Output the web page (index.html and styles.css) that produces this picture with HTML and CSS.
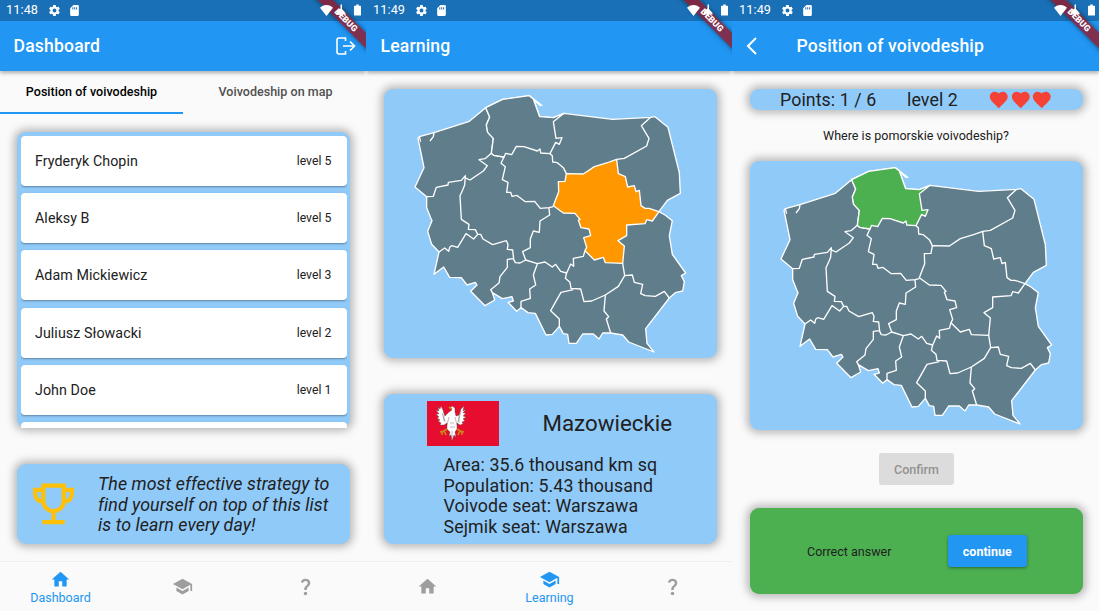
FILE: index.html
```html
<!DOCTYPE html>
<html lang="en">
<head>
<meta charset="utf-8">
<title>Voivodeships</title>
<link rel="stylesheet" href="styles.css">
</head>
<body>
<svg class="defs" aria-hidden="true">
  <symbol id="gear" viewBox="0 0 24 24"><path fill-rule="evenodd" d="M19.400 13c0-.3.1-.7.1-1s0-.7-.1-1l2.100-1.600c.2-.2.2-.4.1-.6l-2-3.500c-.1-.2-.4-.3-.6-.2l-2.500 1c-.5-.4-1.100-.7-1.700-1l-.4-2.600c0-.3-.2-.5-.5-.5h-4c-.3 0-.5.2-.5.4L9 5.100c-.6.2-1.200.6-1.700 1l-2.500-1c-.2-.1-.5 0-.6.200l-2 3.500c-.1.2-.1.5.1.6L4.500 11a8 8 0 0 0 0 2l-2.200 1.600c-.2.2-.2.4-.1.600l2 3.500c.1.2.4.3.6.200l2.500-1c.5.4 1.100.7 1.700 1l.4 2.600c0 .3.2.5.500.5h4c.3 0 .5-.2.500-.4L14.800 19c.6-.3 1.200-.6 1.700-1l2.500 1c.2.1.5 0 .6-.2l2-3.500c.1-.2.1-.5-.1-.6zM12 15.600a3.600 3.600 0 1 1 0-7.200 3.600 3.600 0 0 1 0 7.200z"/></symbol>
  <symbol id="sd" viewBox="0 0 24 24"><path fill-rule="evenodd" d="M18 2h-8L4 8v12c0 1.100.9 2 2 2h12c1.100 0 2-.9 2-2V4c0-1.100-.9-2-2-2zM8 6h1.800v4H8zm3.500 0h1.800v4h-1.800zm3.500 0h1.800v4H15z"/></symbol>
  <symbol id="wifi" viewBox="0 0 24 20"><path d="M12 20 0 5C3 2.500 7 0 12 0s9 2.500 12 5z"/></symbol>
  <symbol id="signal" viewBox="0 0 24 24"><path d="M11 0h3v9l7 8v3l-7-3v5H9v-4l-6 3 1-7 7-6z"/></symbol>
  <symbol id="battery" viewBox="0 0 14 22"><path d="M4.500 0h5v2.500H13a1 1 0 0 1 1 1V21a1 1 0 0 1-1 1H1a1 1 0 0 1-1-1V3.500a1 1 0 0 1 1-1h3.500z"/></symbol>
  <symbol id="home" viewBox="0 0 24 24"><path d="M10 20v-6h4v6h5v-8h3L12 3 2 12h3v8z"/></symbol>
  <symbol id="school" viewBox="0 0 24 24"><path d="M5 13.180v4L12 21l7-3.820v-4L12 17zM12 3 1 9l11 6 9-4.910V17h2V9z"/></symbol>
  <symbol id="question" viewBox="0 0 24 24"><path d="M11.070 12.850c.77-1.390 2.250-2.210 3.110-3.440.91-1.290.4-3.700-2.180-3.700-1.690 0-2.520 1.280-2.870 2.340L6.540 6.960C7.250 4.830 9.180 3 11.990 3c2.350 0 3.960 1.070 4.780 2.410.7 1.150 1.110 3.300.03 4.900-1.200 1.770-2.350 2.310-2.970 3.450-.25.46-.35.760-.35 2.240h-2.890c-.010-.780-.130-2.050.480-3.150zM14 20c0 1.100-.9 2-2 2s-2-.9-2-2 .9-2 2-2 2 .9 2 2z"/></symbol>
  <symbol id="heart" viewBox="0 0 24 24"><path d="m12 21.350-1.450-1.320C5.400 15.360 2 12.280 2 8.500 2 5.420 4.420 3 7.500 3c1.740 0 3.410.81 4.500 2.090C13.090 3.810 14.760 3 16.500 3 19.580 3 22 5.420 22 8.500c0 3.780-3.400 6.860-8.550 11.540z"/></symbol>
  <symbol id="borders" viewBox="-48 12 999 807">
    <path class="land" d="M54 160 58 155 102 143 208 109 257 68 308 43 388 32 400 42 419 95 460 98 492 85 638 103 752 97 765 95 804 127 838 263 841 325 802 346 777 380 795 390 817 407 808 452 817 508 857 564 844 572 853 590 848 618 826 623 808 639 737 731 741 775 762 801 686 771 668 750 632 744 608 744 597 762 580 747 548 747 529 775 507 775 503 748 490 746 478 724 457 748 438 750 406 685 384 683 363 668 350 679 324 652 340 648 336 635 307 641 277 623 284 645 255 662 212 619 231 600 226 592 201 600 184 578 149 577 131 546 102 568 117 501 95 478 83 439 96 407 92 398 80 368 80 335 45 306 72 248Z"/>
    <path class="line" d="M257 68 269 96 259 120 263 142 280 160 274 205 255 221 237 224 262 242 250 258 210 285 194 278M80 335 100 334 109 307 144 300 145 292 184 286 196 272 194 300 188 315 180 332 184 403 207 418 205 433 226 434 233 448M274 205 281 211 312 216 303 235 316 245 307 284 324 292 320 322 332 322 336 334 350 331 376 350 404 349 421 370 447 368 460 365M450 206 457 212 458 231 472 233 490 248 499 266M752 97 724 122 747 160 740 183 673 220 650 223M447 369 449 390 420 408 418 442 400 438 391 462 391 488 368 500 377 525M117 501 134 489 146 499 149 487 155 482 173 487 198 446 221 462 233 448 242 448 249 462 278 479 319 467 324 478 322 493 338 495 341 523 346 533 360 534 377 525 412 536 435 531 457 546 467 538 482 559 500 564 512 537 521 544 520 520 550 514 555 497M341 521 322 523 322 547 300 575 297 594 272 614 277 623M412 536 400 570 407 600 389 612 391 640 363 649 363 668M500 564 496 580 510 592 513 610 542 612 552 650 575 648 616 630 655 604 674 572 668 535M520 614 483 622 452 677 478 702 478 724M616 630 612 678 626 695 619 702 632 744M674 572 697 570 703 592 728 598 722 626 736 632 766 634 793 619 808 639"/>
    <path class="line" d="M388 32 427 62M399 42 422 63M58 155 62 170M102 143 100 155 90 168"/>
  </symbol>
  <symbol id="mazowieckie" viewBox="-48 12 999 807"><path class="line-only" d="M499 266 550 267 583 245 625 232 650 223 655 266 676 275 683 306 703 302 708 320 718 316 723 362 735 370 747 370 777 380 757 408 740 404 735 416 680 420 680 452 654 467 673 483 668 535 616 533 610 517 583 525 555 497 560 487 551 458 572 452 567 432 543 428 535 405 540 403 525 385 490 384 460 362 476 320 475 290 495 289Z"/></symbol>
  <symbol id="pomorskie" viewBox="-48 12 999 807"><path class="line-only" d="M257 68 308 43 388 32 400 42 419 95 460 98 492 85 460 110 468 160 486 158 478 178 467 172 450 206 422 204 420 192 412 198 372 185 349 184 335 209 317 205 312 216 281 211 274 205 280 160 263 142 259 120 269 96Z"/></symbol>
</svg>

<main class="screens">
  <section class="phone">
    <header class="top">
      <div class="status"><span class="time">11:48</span><svg class="s-gear"><use href="#gear"/></svg><svg class="s-sd"><use href="#sd"/></svg><svg class="s-wifi"><use href="#wifi"/></svg><svg class="s-signal"><use href="#signal"/></svg><svg class="s-battery"><use href="#battery"/></svg></div>
      <div class="appbar"><h1>Dashboard</h1><svg class="logout" viewBox="0 0 20 18"><path d="M9.500 4V1H3Q1 1 1 3v12q0 2 2 2h6.500v-3M7 9h11M14 4.500 18.500 9 14 13.500"/></svg></div>
      <div class="debug"><span>DEBUG</span></div>
    </header>
    <nav class="tabs"><div class="tab active">Position of voivodeship</div><div class="tab">Voivodeship on map</div></nav>
    <div class="card ranking">
      <div class="list">
        <div class="row"><span>Fryderyk Chopin</span><small>level 5</small></div>
        <div class="row"><span>Aleksy B</span><small>level 5</small></div>
        <div class="row"><span>Adam Mickiewicz</span><small>level 3</small></div>
        <div class="row"><span>Juliusz Słowacki</span><small>level 2</small></div>
        <div class="row"><span>John Doe</span><small>level 1</small></div>
        <div class="row"></div>
      </div>
    </div>
    <div class="card hint">
      <svg class="trophy" viewBox="0 0 42 42"><path d="M10.500 2.200h21v15.600a10.500 10.500 0 0 1-21 0zM10.500 6.500H2.200v4c0 4.500 3.500 8.300 8.300 8.300M31.500 6.500h8.300v4c0 4.500-3.500 8.300-8.300 8.300M21 28v11.500M9.500 39.500h23"/></svg>
      <p>The most effective strategy to<br>find yourself on top of this list<br>is to learn every day!</p>
    </div>
    <nav class="bottom"><div class="item on"><svg><use href="#home"/></svg><span>Dashboard</span></div><div class="item"><svg><use href="#school"/></svg></div><div class="item"><svg><use href="#question"/></svg></div></nav>
  </section>

  <section class="phone second">
    <header class="top">
      <div class="status"><span class="time">11:49</span><svg class="s-gear"><use href="#gear"/></svg><svg class="s-sd"><use href="#sd"/></svg><svg class="s-wifi"><use href="#wifi"/></svg><svg class="s-signal"><use href="#signal"/></svg><svg class="s-battery"><use href="#battery"/></svg></div>
      <div class="appbar"><h1>Learning</h1></div>
      <div class="debug"><span>DEBUG</span></div>
    </header>
    <div class="card map learn-map"><svg viewBox="0 0 333 269"><use href="#borders"/><use class="plain" href="#pomorskie"/><use class="picked" href="#mazowieckie"/></svg></div>
    <div class="card info">
      <div class="info-head">
        <svg class="flag" viewBox="0 0 72 45"><path fill="#e70d2f" d="M0 0h72v45H0z"/><g fill="#fff" stroke="#4b3336" stroke-width=".35"><path d="M22 11 18 15 16 9 14 5 13 8 11 6 12 10 9 9 12 13 9 13 12 16 10 17 13 19 11 20 14 22 13 24 17 24 20 22 20 28 23 31 22 35 24 34 25 40 27 34 29 36 28 31 30 28 30 22 33 24 36 23 35 21 38 20 36 18 39 16 36 15 39 12 36 12 39 8 36 10 37 5 34 8 32 14 29 15 28 11 28 7 25 5 23 7 25 9Z"/><path d="M17 10v10M15 12l3 9M34 10l-3 11M32 13v9M22 16l-2 8M28 16l2 8M23 22h4M23 26h5M25 30v8" fill="none"/></g><path d="m22 6 3 2M20 28l-5 3M13 31l4-1 2 4M15 31v3M30 28l5 3M37 31l-4-1-2 4M35 31v3" stroke="#c98b18" stroke-width="1.600" fill="none"/></svg>
        <h2>Mazowieckie</h2>
      </div>
      <p>Area: 35.6 thousand km sq<br>Population: 5.43 thousand<br>Voivode seat: Warszawa<br>Sejmik seat: Warszawa</p>
    </div>
    <nav class="bottom"><div class="item"><svg><use href="#home"/></svg></div><div class="item on"><svg><use href="#school"/></svg><span>Learning</span></div><div class="item"><svg><use href="#question"/></svg></div></nav>
  </section>

  <section class="phone third">
    <header class="top">
      <div class="status"><span class="time">11:49</span><svg class="s-gear"><use href="#gear"/></svg><svg class="s-sd"><use href="#sd"/></svg><svg class="s-wifi"><use href="#wifi"/></svg><svg class="s-signal"><use href="#signal"/></svg><svg class="s-battery"><use href="#battery"/></svg></div>
      <div class="appbar"><svg class="back" viewBox="0 0 11 18"><path d="M10 1 2 9l8 8"/></svg><h1>Position of voivodeship</h1></div>
      <div class="debug"><span>DEBUG</span></div>
    </header>
    <div class="card score"><span class="points">Points: 1 / 6</span><span class="level">level 2</span><span class="hearts"><svg><use href="#heart"/></svg><svg><use href="#heart"/></svg><svg><use href="#heart"/></svg></span></div>
    <p class="ask">Where is pomorskie voivodeship?</p>
    <div class="card map"><svg viewBox="0 0 333 269"><use href="#borders"/><use class="plain" href="#mazowieckie"/><use class="right" href="#pomorskie"/></svg></div>
    <button class="confirm" disabled>Confirm</button>
    <div class="card answer"><span>Correct answer</span><button class="continue">continue</button></div>
  </section>
</main>
</body>
</html>
```
FILE: styles.css
```css
* { box-sizing: border-box; }
body { margin: 0; background: #fafafa; font-family: Roboto, sans-serif; color: #212121; }
h1, h2, p { margin: 0; font-weight: 400; }
svg { display: block; flex: none; }
.defs { position: absolute; width: 0; height: 0; }
.screens { display: flex; width: 1099px; height: 611px; overflow: hidden; }
.phone { width: 366px; height: 611px; flex: none; display: flex; flex-direction: column; overflow: hidden; background: #fafafa; }
.third { width: 367px; }

.top { position: relative; height: 71px; flex: none; background: #2196f3; box-shadow: 0 2px 4px rgba(0,0,0,.32); clip-path: inset(0 0 -10px 0); }
.status { height: 21px; display: flex; align-items: center; padding: 0 5px 1px 6px; background: #1a70b6; color: #fff; fill: #fff; }
.second .status, .third .status { padding: 0 4px 1px 7px; }
.status svg { position: relative; z-index: 1; }
.time { width: 41.500px; font-size: 12.700px; line-height: 20px; letter-spacing: .1px; }
.s-gear { width: 13px; height: 13px; }
.s-sd { width: 13px; height: 13px; margin-left: 7px; }
.s-wifi { width: 13px; height: 11px; margin-left: auto; }
.s-signal { width: 12px; height: 13px; margin-left: 2px; }
.s-battery { width: 7px; height: 12px; margin-left: 7.500px; }
.appbar { height: 50px; display: flex; align-items: center; padding: 0 10px 0 13.500px; color: #fff; }
.second .appbar { padding-left: 14.500px; }
.third .appbar { padding-left: 14px; }
.appbar h1 { font-size: 17.600px; font-weight: 500; letter-spacing: .16px; line-height: 22px; white-space: nowrap; }
.logout { width: 20px; height: 18px; margin-left: auto; fill: none; stroke: #fff; stroke-width: 1.600; }
.back { width: 11px; height: 18px; margin-right: 39.500px; fill: none; stroke: #fff; stroke-width: 2; }
.debug { position: absolute; top: 0; right: 0; width: 60px; height: 60px; overflow: hidden; }
.debug span { position: absolute; left: -5px; top: 15px; width: 90px; height: 10.500px; transform: rotate(45deg); background: rgba(145,26,43,.82); box-shadow: 0 0 5px rgba(0,0,0,.5); color: #fff; font-size: 8.800px; line-height: 10.500px; font-weight: 900; text-align: center; }

.tabs { height: 43px; flex: none; display: flex; font-size: 12.500px; font-weight: 500; letter-spacing: .03px; }
.tab { width: 183px; flex: none; text-align: center; line-height: 42px; height: 43px; color: #505050; padding-left: 2px; }
.tab.active { color: #000; border-bottom: 2px solid #2196f3; padding-left: 0; }

.card { flex: none; width: 333px; margin-left: 17px; border-radius: 9px; background: #90caf9; box-shadow: 0 0 9px 3px rgba(0,0,0,.27); }
.second .card, .third .card { margin-left: 18px; }
.ranking { height: 296px; margin-top: 18px; padding: 3.500px 3.500px 0; }
.list { height: 292.500px; overflow: hidden; display: flex; flex-direction: column; gap: 7.400px; }
.row { height: 50px; flex: none; display: flex; justify-content: space-between; align-items: center; padding: 0 15px 0 14.500px; background: #fff; border-radius: 4px; box-shadow: 0 1px 2px rgba(0,0,0,.35); font-size: 14.250px; letter-spacing: .06px; }
.row small { font-size: 12.200px; letter-spacing: .05px; }
.hint { height: 80px; margin-top: 36px; display: flex; padding: 10px 0 0 16px; }
.trophy { width: 41px; height: 42px; margin-top: 9px; fill: none; stroke: #ffc107; stroke-width: 4.300; }
.hint p { margin-left: 24px; font-size: 17.800px; letter-spacing: .06px; line-height: 20.700px; font-style: italic; white-space: nowrap; }

.bottom { height: 50px; margin-top: auto; flex: none; display: flex; border-top: 1px solid #eee; color: #2196f3; }
.item { width: 123px; flex: none; display: flex; flex-direction: column; align-items: center; justify-content: center; padding-bottom: 1px; fill: #9e9e9e; }
.item:first-child { width: 121px; }
.second .item:first-child { width: 122px; }
.item svg { width: 21px; height: 21px; }
.item.on { fill: #2196f3; justify-content: flex-start; padding-top: 7px; }
.item span { font-size: 12.500px; line-height: 15px; }

.map { height: 269px; }
.map svg { width: 333px; height: 269px; }
.learn-map { margin-top: 18px; }
.land { fill: #607d8b; stroke: #fff; stroke-width: 4; stroke-linejoin: round; }
.line { fill: none; stroke: #fff; stroke-width: 4; stroke-linejoin: round; }
.line-only { stroke: #fff; stroke-width: 4; stroke-linejoin: round; }
.plain { fill: #607d8b; }
.picked { fill: #ff9800; }
.right { fill: #4caf50; }
.info { height: 150px; margin-top: 36px; padding: 7px 0 0 43.400px; }
.info-head { display: flex; align-items: center; height: 45px; }
.flag { width: 72px; height: 45px; }
.info h2 { margin-left: 43px; font-size: 22.300px; letter-spacing: .03px; line-height: 26px; padding-bottom: 1px; }
.info p { margin: 9px 0 0 16.200px; font-size: 17.800px; letter-spacing: .09px; line-height: 20.650px; white-space: nowrap; }

.score { height: 21px; margin-top: 18px; display: flex; align-items: center; font-size: 17.800px; line-height: 21px; letter-spacing: .08px; }
.points { margin-left: 30px; width: 127px; white-space: nowrap; }
.level { width: 81px; white-space: nowrap; }
.hearts { display: flex; }
.hearts svg { width: 21.500px; height: 21.500px; fill: #f44336; }
.ask { height: 51px; line-height: 51px; padding-left: 1px; text-align: center; font-size: 12.500px; letter-spacing: .02px; }
button { border: 0; font-family: inherit; font-size: 12.500px; font-weight: 500; padding: 0; height: 32px; border-radius: 3px; }
.confirm { width: 75px; margin: 23px 0 0 147px; background: #dcdcdc; color: #929292; }
.third .answer { display: flex; align-items: center; height: 86px; margin-top: 23px; padding-left: 57px; background: #4caf50; font-size: 12.500px; }
.answer span { width: 141px; letter-spacing: 0; }
.continue { width: 78.500px; background: #2196f3; color: #fff; font-weight: 700; box-shadow: 0 1px 3px rgba(0,0,0,.4); }
```
